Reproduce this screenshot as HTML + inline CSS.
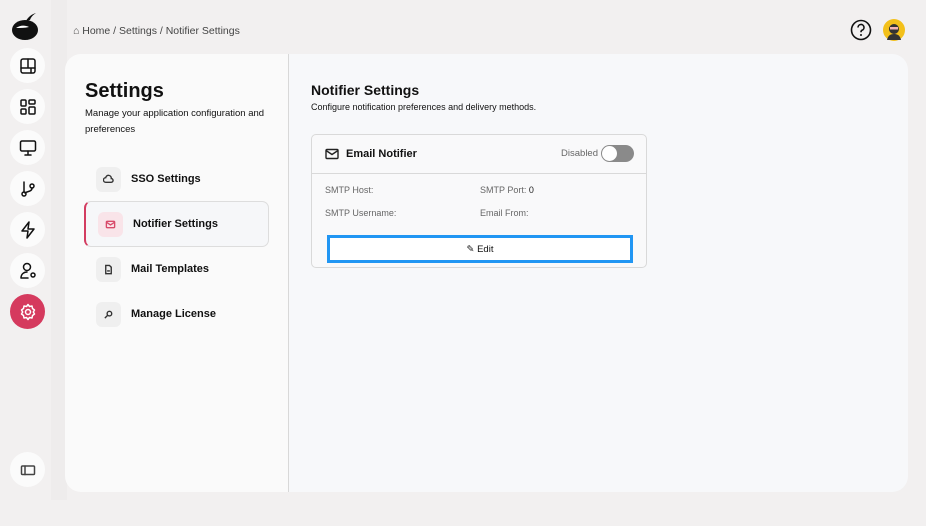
<!DOCTYPE html>
<html><head><meta charset="utf-8"><style>
*{box-sizing:border-box;margin:0;padding:0}
body{width:926px;height:526px;background:#f2f0f0;font-family:"Liberation Sans",sans-serif;position:relative;overflow:hidden;color:#111}
.strip{position:absolute;left:51px;top:0;width:16px;height:500px;background:#eeecec}
.nav{position:absolute;left:10px;width:35px;height:35px;border-radius:50%;background:#fbfbfb;display:flex;align-items:center;justify-content:center}
.nav svg{width:18px;height:18px;fill:none;stroke:#111;stroke-width:1.5;stroke-linecap:round;stroke-linejoin:round}
.crumb{position:absolute;left:73px;top:25px;font-size:10.5px;color:#444}
.left{position:absolute;left:65px;top:54px;width:224px;height:438px;background:#fafafa;border-radius:16px 0 0 16px;border-right:1px solid #d8d8d8}
.right{position:absolute;left:289px;top:54px;width:619px;height:438px;background:#f7f8fa;border-radius:0 16px 16px 0}
h1{position:absolute;left:20px;top:26px;font-size:20px;font-weight:bold}
.sub{position:absolute;left:20px;top:52px;font-size:9.5px;line-height:16px;width:200px}
.item{position:absolute;left:19px;width:185px;height:46px;display:flex;align-items:center;font-size:11px;font-weight:bold}
.ic{width:25px;height:25px;border-radius:6px;background:#efefef;margin:0 10px 0 12px;display:flex;align-items:center;justify-content:center}
.ic svg{width:11px;height:11px;fill:none;stroke:#333;stroke-width:1.5}
.active{border:1px solid #ddd;border-left:2px solid #d33c60;border-radius:7px;background:#f6f7f9}
h2{position:absolute;left:22px;top:28px;font-size:14px;font-weight:bold}
.d{position:absolute;left:22px;top:48px;font-size:9px}
.card{position:absolute;left:22px;top:80px;width:336px;height:134px;border:1px solid #d9d9d9;border-radius:5px;background:#f9f9fa}
.ch{height:39px;border-bottom:1px solid #d9d9d9;display:flex;align-items:center;padding:0 13px;font-size:11px;font-weight:bold}
.lab{position:absolute;font-size:9px;color:#666}
.tog{position:absolute;right:12px;top:10px;width:33px;height:17px;border-radius:9px;background:#8a8a8a}
.tog:after{content:"";position:absolute;left:1px;top:1px;width:15px;height:15px;border-radius:50%;background:#fff}
.edit{position:absolute;left:15px;top:100px;width:306px;height:28px;border:3px solid #2196f3;background:#fff;display:flex;align-items:center;justify-content:center;font-size:9.5px}
</style></head><body>
<div class="strip"></div>
<svg style="position:absolute;left:11px;top:9px" width="30" height="33" viewBox="0 0 30 33"><path d="M15 12c2-4 6-7 10-8-3 2-5 4-6 7" fill="#111"/><ellipse cx="14" cy="21" rx="13" ry="10" fill="#111"/><path d="M5 19c4-3 9-3 13-1-4 1-9 1-13 1z" fill="#fff"/></svg>
<div class="nav" style="top:48px"><svg viewBox="0 0 18 18"><rect x="2" y="2" width="14" height="14" rx="2"/><path d="M2 11h14M9 2v9M12 11v5"/></svg></div>
<div class="nav" style="top:89px"><svg viewBox="0 0 18 18"><rect x="2" y="2" width="5" height="6" rx="1"/><rect x="10" y="2" width="6" height="4" rx="1"/><rect x="2" y="11" width="5" height="5" rx="1"/><rect x="10" y="9" width="6" height="7" rx="1"/></svg></div>
<div class="nav" style="top:130px"><svg viewBox="0 0 18 18"><rect x="1.5" y="2" width="15" height="10" rx="1.5"/><path d="M9 12v4M6 16h6"/></svg></div>
<div class="nav" style="top:171px"><svg viewBox="0 0 18 18"><circle cx="5" cy="14" r="2"/><circle cx="13" cy="6" r="2"/><path d="M5 2v10M13 8c0 4-5 3-7 5"/></svg></div>
<div class="nav" style="top:212px"><svg viewBox="0 0 18 18"><path d="M10 1L3 10h6l-1 7 7-9H9z"/></svg></div>
<div class="nav" style="top:253px"><svg viewBox="0 0 18 18"><circle cx="8" cy="5" r="3.5"/><path d="M2 16c0-4 3-6 6-6M2 16h7"/><circle cx="14" cy="13" r="2"/></svg></div>
<div class="nav" style="top:294px;background:#d53a5e"><svg viewBox="0 0 18 18" style="stroke:#fff"><circle cx="9" cy="9" r="2.5"/><path d="M9 1.5l1.5 2 2.5-.5.5 2.5 2 1.5-1.2 2 1.2 2-2 1.5-.5 2.5-2.5-.5L9 16.5l-1.5-2-2.5.5-.5-2.5-2-1.5 1.2-2-1.2-2 2-1.5.5-2.5 2.5.5z"/></svg></div>
<div class="nav" style="top:452px"><svg viewBox="0 0 18 18" style="stroke:#444;stroke-width:1.5"><rect x="2.5" y="5" width="13" height="8.5" rx="1"/><path d="M6 5v8.5"/></svg></div>
<div class="crumb">⌂ Home / Settings / Notifier Settings</div>
<svg style="position:absolute;left:850px;top:19px" width="22" height="22" viewBox="0 0 22 22"><circle cx="11" cy="11" r="9.5" fill="none" stroke="#111" stroke-width="1.6"/><path d="M8 8.5a3 3 0 1 1 4 2.8c-1 .4-1 1-1 2" fill="none" stroke="#111" stroke-width="1.6"/><circle cx="11" cy="16" r="1" fill="#111"/></svg>
<svg style="position:absolute;left:883px;top:19px" width="22" height="22" viewBox="0 0 22 22"><circle cx="11" cy="11" r="11" fill="#f3c01a"/><path d="M4 21c1-5 4-6 7-6s6 1 7 6z" fill="#333"/><circle cx="11" cy="10" r="5" fill="#333"/><rect x="7" y="8" width="8" height="2.5" fill="#f5b5b5"/></svg>
<div class="left">
<h1>Settings</h1>
<div class="sub">Manage your application configuration and preferences</div>
<div class="item" style="top:102px"><div class="ic"><svg viewBox="0 0 12 12"><path d="M3 9a2.5 2.5 0 0 1 0-5 3 3 0 0 1 6 1 2 2 0 0 1 0 4z"/></svg></div>SSO Settings</div>
<div class="item active" style="top:147px"><div class="ic" style="background:#f9e4e9"><svg viewBox="0 0 12 12" style="stroke:#d84a6a"><rect x="1.5" y="2.5" width="9" height="7" rx="1"/><path d="M1.5 3.5l4.5 3 4.5-3"/></svg></div>Notifier Settings</div>
<div class="item" style="top:192px"><div class="ic"><svg viewBox="0 0 12 12"><path d="M3 1.5h4l2 2v7H3z M4.5 7.5h3"/></svg></div>Mail Templates</div>
<div class="item" style="top:237px"><div class="ic"><svg viewBox="0 0 12 12"><circle cx="7" cy="5" r="2.5"/><path d="M5 7l-3 3"/></svg></div>Manage License</div>
</div>
<div class="right">
<h2>Notifier Settings</h2>
<div class="d">Configure notification preferences and delivery methods.</div>
<div class="card">
<div class="ch"><svg width="14" height="12" viewBox="0 0 14 12" style="margin-right:7px"><rect x="1" y="1.5" width="12" height="9" rx="1" fill="none" stroke="#222" stroke-width="1.4"/><path d="M1 2.5l6 4 6-4" fill="none" stroke="#222" stroke-width="1.4"/></svg>Email Notifier<span style="position:absolute;right:48px;top:13px;font-size:9.5px;font-weight:normal;color:#666">Disabled</span></div>
<div class="tog"></div>
<div class="lab" style="left:13px;top:50px">SMTP Host:</div>
<div class="lab" style="left:168px;top:50px">SMTP Port: <span style="color:#222">0</span></div>
<div class="lab" style="left:13px;top:73px">SMTP Username:</div>
<div class="lab" style="left:168px;top:73px">Email From:</div>
<div class="edit">✎ Edit</div>
</div>
</div>
</body></html>
